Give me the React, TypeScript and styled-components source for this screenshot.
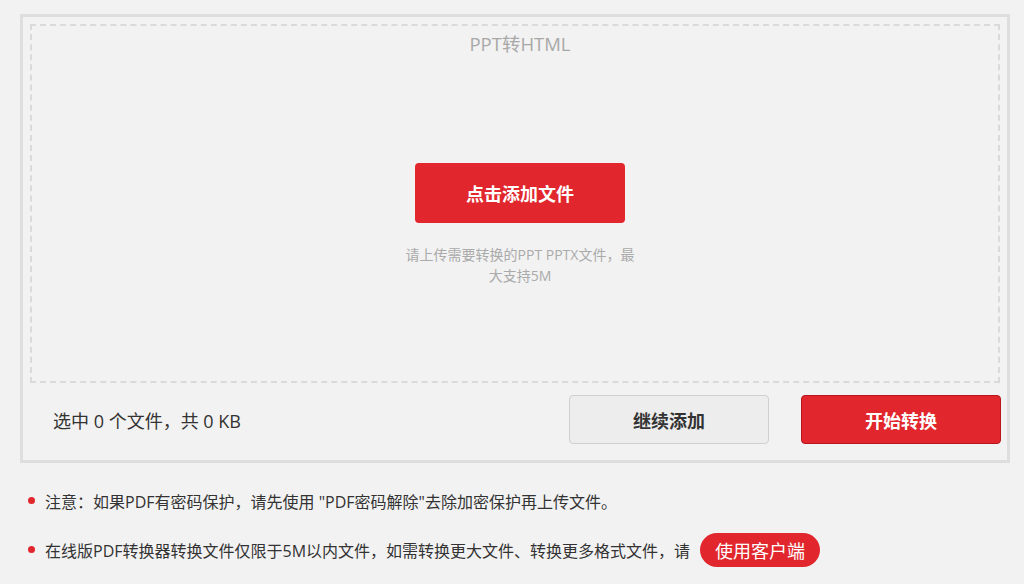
import styled, { createGlobalStyle } from 'styled-components';

const GlobalStyle = createGlobalStyle`
	html, body {
		margin: 0;
		padding: 0;
		background: #f2f2f2;
	}
	body {
		font-family: "Open Sans", "Noto Sans CJK SC", "Liberation Sans", sans-serif;
		color: #333;
	}
`;

const notes = [
	'注意：如果PDF有密码保护，请先使用 "PDF密码解除"去除加密保护再上传文件。',
	'在线版PDF转换器转换文件仅限于5M以内文件，如需转换更大文件、转换更多格式文件，请',
];

const App = () => {
	return (
		<>
			<GlobalStyle />
			<Page>
				<UploadPanel>
					<DropZone>
						<Title>PPT转HTML</Title>
						<DropCenter>
							<AddButton>点击添加文件</AddButton>
							<Hint>请上传需要转换的PPT PPTX文件，最大支持5M</Hint>
						</DropCenter>
					</DropZone>
					<ActionBar>
						<Summary>选中 0 个文件，共 0 KB</Summary>
						<Actions>
							<ActionButton variant='plain'>继续添加</ActionButton>
							<ActionButton variant='primary'>开始转换</ActionButton>
						</Actions>
					</ActionBar>
				</UploadPanel>
				<NoteList>
					<NoteItem>{notes[0]}</NoteItem>
					<NoteItem>
						{notes[1]}
						<ClientButton>使用客户端</ClientButton>
					</NoteItem>
				</NoteList>
			</Page>
		</>
	);
};
export default App;

const Page = styled.div`
	width: 1024px;
	height: 584px;
	box-sizing: border-box;
	padding: 14px 14px 0 20px;
	overflow: hidden;
`;

const UploadPanel = styled.div`
	width: 990px;
	box-sizing: border-box;
	border: 3px solid #dedede;
	padding: 7px 7px 0 7px;
	display: flex;
	flex-direction: column;
`;

const DropZone = styled.div`
	height: 359px;
	box-sizing: border-box;
	border: 2px dashed #dadada;
	padding-left: 10px;
	display: flex;
	flex-direction: column;
	align-items: center;
`;

const Title = styled.div`
	margin-top: 6px;
	font-size: 18.5px;
	line-height: 24px;
	color: #a8a8a8;
`;

const DropCenter = styled.div`
	margin-top: 107px;
	display: flex;
	flex-direction: column;
	align-items: center;
`;

const AddButton = styled.button`
	width: 210px;
	height: 60px;
	border: none;
	border-radius: 4px;
	background: #e1262d;
	color: #fff;
	font-family: inherit;
	font-size: 18px;
	font-weight: 700;
	cursor: pointer;
`;

const Hint = styled.p`
	width: 240px;
	margin: 21px 0 0;
	font-size: 14px;
	line-height: 21px;
	color: #aaa;
	text-align: center;
`;

const ActionBar = styled.div`
	height: 77px;
	box-sizing: border-box;
	display: flex;
	align-items: flex-start;
	justify-content: space-between;
	padding: 12px 0 0 23px;
	margin-right: -1px;
`;

const Summary = styled.span`
	margin-top: 14px;
	font-size: 18px;
	line-height: 24px;
	color: #333;
`;

const Actions = styled.div`
	display: flex;
	gap: 32px;
`;

const ActionButton = styled.button<{
	variant: 'plain' | 'primary';
}>`
	width: 200px;
	height: 49px;
	border-radius: 4px;
	font-family: inherit;
	font-size: 18px;
	font-weight: 700;
	cursor: pointer;
	border: 1px solid ${(props) => (props.variant === 'primary' ? '#b8161c' : '#cfcfcf')};
	background: ${(props) => (props.variant === 'primary' ? '#e1262d' : '#ededed')};
	color: ${(props) => (props.variant === 'primary' ? '#fff' : '#333')};
`;

const NoteList = styled.ul`
	list-style: none;
	margin: 21px 0 0;
	padding: 0;
	display: flex;
	flex-direction: column;
	gap: 15px;
`;

const NoteItem = styled.li`
	position: relative;
	display: flex;
	align-items: center;
	min-height: 34px;
	padding-left: 25px;
	font-size: 16px;
	color: #333;
	&::before {
		content: '';
		position: absolute;
		left: 8px;
		top: 50%;
		width: 7px;
		height: 7px;
		margin-top: -4px;
		border-radius: 50%;
		background: #e1262d;
	}
`;

const ClientButton = styled.button`
	margin-left: 10px;
	height: 34px;
	padding: 0 15px;
	border: none;
	border-radius: 17px;
	background: #e1262d;
	color: #fff;
	font-family: inherit;
	font-size: 18px;
	cursor: pointer;
`;
